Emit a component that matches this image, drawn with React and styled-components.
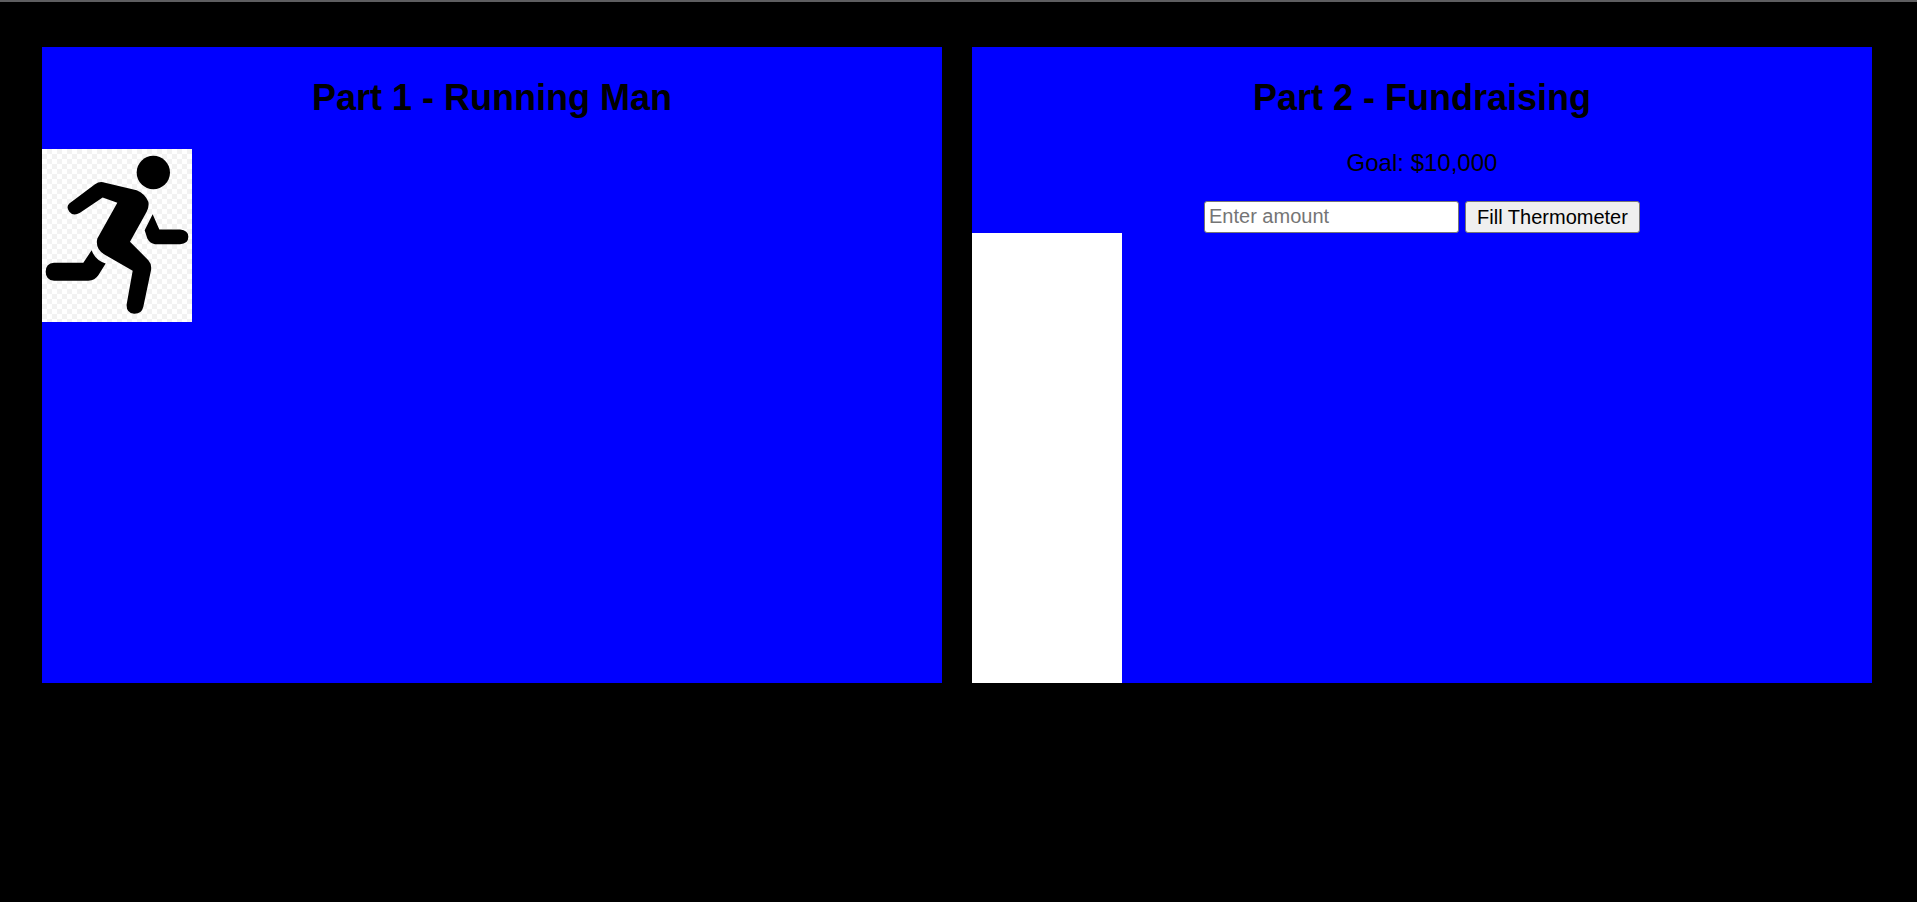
import styled, { createGlobalStyle } from "styled-components";

const Global = createGlobalStyle`
  html, body {
    margin: 0;
    padding: 0;
    background: #000;
    font-family: "Liberation Sans", Arial, sans-serif;
  }
`;

const TopLine = styled.div`
  height: 2px;
  background: #5e5e60;
`;

const Page = styled.div`
  display: flex;
  gap: 30px;
  padding: 45px 0 0 42px;
  height: 855px;
`;

const Panel = styled.section`
  width: 900px;
  height: 636px;
  background: #0000ff;
  color: #000;
  text-align: center;
  display: flex;
  flex-direction: column;
`;

const Title = styled.h1`
  margin: 30px 0 31px;
  font-size: 36px;
  line-height: 41px;
  font-weight: bold;
`;

const Runner = styled.svg`
  display: block;
  width: 150px;
  height: 173px;
  background-color: #fff;
  background-image: conic-gradient(#f2f2f2 25%, #fff 0 50%, #f2f2f2 0 75%, #fff 0);
  background-size: 10px 10px;
`;

const Goal = styled.p`
  margin: 0 0 25px;
  font-size: 24px;
  line-height: 27px;
`;

const Form = styled.form`
  display: flex;
  justify-content: center;
  gap: 6px;
  height: 32px;
`;

const Amount = styled.input`
  box-sizing: border-box;
  width: 255px;
  height: 32px;
  padding: 0 4px 2px;
  border: 1px solid #767676;
  border-radius: 3px;
  background: #fff;
  font-family: inherit;
  font-size: 20px;
`;

const Fill = styled.button`
  box-sizing: border-box;
  width: 175px;
  height: 32px;
  padding: 0;
  border: 1px solid #767676;
  border-radius: 3px;
  background: #efefef;
  color: #000;
  font-family: inherit;
  font-size: 20px;
`;

const Thermometer = styled.div`
  width: 150px;
  flex: 1;
  background: #fff;
`;

function RunningMan() {
  return (
    <Runner viewBox="36 27 450 518">
      <circle cx="370" cy="97" r="50" />
      <path d="M118 190 L195 132 Q210 122 225 128 L320 150 Q345 160 355 185 Q358 200 350 215 L300 305 L355 360 Q366 372 363 390 L340 500 Q335 522 312 521 Q288 518 290 492 L308 392 L222 342 Q195 325 202 295 L262 188 L218 172 L150 218 Q130 230 118 215 Q107 200 118 190 Z" />
      <path d="M185 330 L160 368 L72 368 Q47 370 47 395 Q47 420 72 422 L175 422 Q195 420 205 405 L227 370 Q195 360 185 330 Z" />
      <path d="M368 222 L388 268 L450 268 Q475 270 475 290 Q475 312 450 312 L375 312 Q360 310 352 295 L344 270 Z" />
    </Runner>
  );
}

export default function App() {
  return (
    <>
      <Global />
      <TopLine />
      <Page>
        <Panel>
          <Title>Part 1 - Running Man</Title>
          <RunningMan />
        </Panel>
        <Panel>
          <Title>Part 2 - Fundraising</Title>
          <Goal>Goal: $10,000</Goal>
          <Form onSubmit={(e) => e.preventDefault()}>
            <Amount type="number" placeholder="Enter amount" />
            <Fill type="submit">Fill Thermometer</Fill>
          </Form>
          <Thermometer />
        </Panel>
      </Page>
    </>
  );
}
